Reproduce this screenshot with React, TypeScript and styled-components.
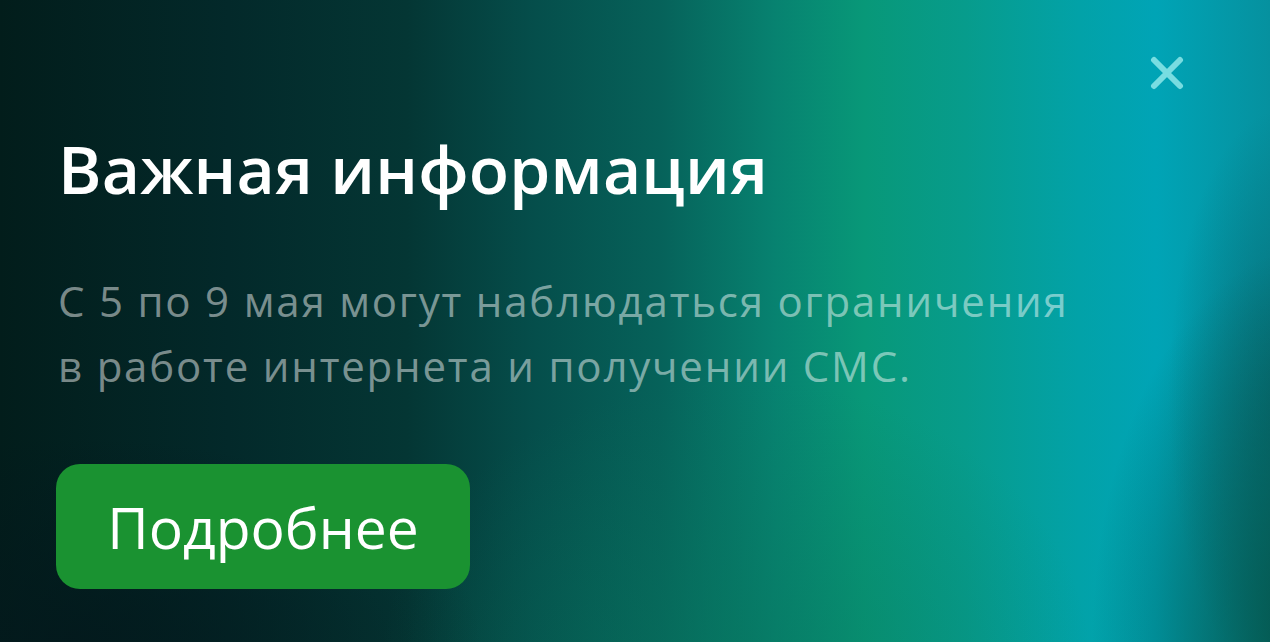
import styled, { createGlobalStyle } from "styled-components";

const GlobalStyle = createGlobalStyle`
  html, body {
    margin: 0;
    padding: 0;
    width: 100%;
    height: 100%;
    overflow: hidden;
  }
  #root {
    height: 100%;
  }
`;

const Banner = styled.section`
  box-sizing: border-box;
  width: 1270px;
  height: 642px;
  display: flex;
  flex-direction: column;
  padding: 56px 86px 0 58px;
  font-family: "Open Sans", "Noto Sans", sans-serif;
  background:
    radial-gradient(ellipse 18% 62% at 104% 100%, rgba(4, 76, 62, 0.95), rgba(4, 76, 62, 0) 100%),
    radial-gradient(ellipse 9% 45% at 101% 62%, rgba(6, 96, 104, 0.7), rgba(6, 96, 104, 0) 100%),
    radial-gradient(ellipse 28% 45% at 58% 104%, rgba(7, 118, 92, 0.5), rgba(7, 118, 92, 0) 100%),
    radial-gradient(ellipse 32% 32% at 6% 100%, rgba(3, 24, 28, 0.8), rgba(3, 24, 28, 0) 100%),
    linear-gradient(
      90deg,
      #021d1b 0%,
      #03292a 18%,
      #043634 32%,
      #054e4b 42%,
      #06625a 52%,
      #078270 61%,
      #089878 68%,
      #079c8c 76%,
      #02a2a8 85%,
      #00a4b6 91%,
      #06919f 100%
    );
`;

const TopRow = styled.div`
  display: flex;
  justify-content: flex-end;
  height: 34px;
`;

const CloseButton = styled.button`
  width: 34px;
  height: 34px;
  padding: 0;
  border: none;
  background: none;
  cursor: pointer;
  display: flex;
  align-items: center;
  justify-content: center;
`;

const Title = styled.h1`
  margin: 37px 0 0;
  font-size: 66px;
  line-height: 82px;
  font-weight: 600;
  color: #ffffff;
  letter-spacing: 0.2px;
`;

const Text = styled.p`
  margin: 59px 0 0;
  font-size: 42px;
  line-height: 65px;
  font-weight: 400;
  letter-spacing: 1.8px;
  color: rgba(255, 255, 255, 0.48);
`;

const MoreButton = styled.button`
  align-self: flex-start;
  margin-top: 66px;
  margin-left: -2px;
  width: 414px;
  height: 125px;
  border: none;
  border-radius: 24px;
  background: #1a9231;
  color: #ffffff;
  font-family: "Open Sans", "Noto Sans", sans-serif;
  font-size: 57px;
  font-weight: 400;
  cursor: pointer;
`;

const CloseIcon = () => (
  <svg width="34" height="34" viewBox="0 0 34 34" fill="none">
    <path
      d="M4 4 L30 30 M30 4 L4 30"
      stroke="rgba(160, 240, 240, 0.75)"
      strokeWidth="6"
      strokeLinecap="round"
    />
  </svg>
);

export default function App() {
  return (
    <>
      <GlobalStyle />
      <Banner>
        <TopRow>
          <CloseButton aria-label="Закрыть">
            <CloseIcon />
          </CloseButton>
        </TopRow>
        <Title>Важная информация</Title>
        <Text>
          С 5 по 9 мая могут наблюдаться ограничения
          <br />в работе интернета и получении СМС.
        </Text>
        <MoreButton>Подробнее</MoreButton>
      </Banner>
    </>
  );
}
